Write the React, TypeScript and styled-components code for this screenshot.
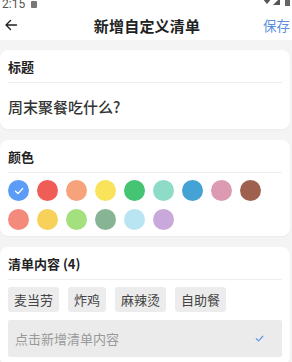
import React from "react";
import styled, { createGlobalStyle } from "styled-components";

const Global = createGlobalStyle`
  html, body { margin: 0; padding: 0; }
  body {
    background: #f4f4f4;
    font-family: "Noto Sans CJK SC", "Noto Sans", sans-serif;
    width: 292px;
    height: 362px;
    overflow: hidden;
  }
`;

const Page = styled.div`
  display: flex;
  flex-direction: column;
  width: 292px;
`;

const Header = styled.div`
  background: #ffffff;
  display: flex;
  flex-direction: column;
  height: 40px;
`;

const StatusBar = styled.div`
  height: 10px;
  overflow: hidden;
  display: flex;
  align-items: flex-start;
  justify-content: space-between;
  padding: 0 0 0 2px;
`;

const StatusTime = styled.div`
  display: flex;
  align-items: center;
  gap: 6px;
  margin-top: -3px;
  font-family: "Roboto", sans-serif;
  font-size: 12px;
  line-height: 14px;
  color: #555;
`;

const StatusNotif = styled.span`
  width: 6px;
  height: 7px;
  background: #777;
  border-radius: 1px;
`;

const StatusIcons = styled.div`
  display: flex;
  align-items: flex-start;
  gap: 2px;
  margin-top: -2px;
`;

const NavBar = styled.div`
  flex: 1;
  display: grid;
  grid-template-columns: 60px 1fr 60px;
  align-items: center;
  padding: 0 2px 0 4px;
`;

const BackButton = styled.div`
  display: flex;
  align-items: center;
  color: #222;
`;

const NavTitle = styled.div`
  text-align: center;
  font-size: 15px;
  font-weight: 700;
  color: #222;
  letter-spacing: 0.2px;
`;

const SaveButton = styled.div`
  text-align: right;
  font-size: 13.5px;
  color: #5a8fe2;
`;

const Content = styled.div`
  display: flex;
  flex-direction: column;
  gap: 11px;
  padding: 10px 2px 0 0;
`;

const Card = styled.div`
  background: #ffffff;
  border-radius: 8px;
  box-shadow: 0 1px 2px rgba(0, 0, 0, 0.04);
  display: flex;
  flex-direction: column;
`;

const CardHeader = styled.div`
  height: 32px;
  display: flex;
  align-items: center;
  margin: 0 8px;
  border-bottom: 1px solid #eeeeee;
  font-size: 13px;
  font-weight: 700;
  color: #222;
`;

const TitleBody = styled.div`
  height: 46px;
  display: flex;
  align-items: center;
  padding: 0 8px;
  font-size: 15px;
  font-weight: 500;
  color: #333;
`;

const ColorGrid = styled.div`
  display: grid;
  grid-template-columns: repeat(9, 21px);
  column-gap: 8px;
  row-gap: 8px;
  padding: 7px 8px 6px;
`;

const Swatch = styled.div<{ $c: string }>`
  width: 21px;
  height: 21px;
  border-radius: 50%;
  background: ${(p) => p.$c};
  display: flex;
  align-items: center;
  justify-content: center;
`;

const ListBody = styled.div`
  display: flex;
  flex-direction: column;
  gap: 8px;
  padding: 7px 8px 8px;
`;

const Chips = styled.div`
  display: flex;
  gap: 9px;
`;

const Chip = styled.div`
  height: 25px;
  padding: 0 6px;
  display: flex;
  align-items: center;
  background: #ececec;
  border-radius: 3px;
  font-size: 13px;
  color: #444;
`;

const InputBox = styled.div`
  height: 37px;
  background: #ebebeb;
  border-radius: 2px;
  display: flex;
  align-items: center;
  justify-content: space-between;
  padding: 0 17px 0 7px;
  font-size: 13px;
  color: #999;
`;

const colors1 = ["#5b9cf6", "#ef5d56", "#f6a27b", "#f8e35b", "#45c474", "#8edcc8", "#44a2d4", "#dc9bb3", "#9f614f"];
const colors2 = ["#f48a7b", "#f8d15b", "#a5e07f", "#86b495", "#b9e4f1", "#c9a9dc"];

const Check = ({ color, size }: { color: string; size: number }) => (
  <svg width={size} height={size} viewBox="0 0 12 12" fill="none">
    <path d="M2.5 6.3 L5 8.6 L9.6 3.6" stroke={color} strokeWidth="1.4" strokeLinecap="round" strokeLinejoin="round" />
  </svg>
);

export default function App() {
  return (
    <>
      <Global />
      <Page>
        <Header>
          <StatusBar>
            <StatusTime>
              <span>2:15</span>
              <StatusNotif />
            </StatusTime>
            <StatusIcons>
              <svg width="30" height="8" viewBox="0 0 30 8">
                <path d="M0 0 L10 0 L5 6 Z" fill="#555" />
                <path d="M11 7 L18 0 L18 7 Z" fill="#555" />
                <rect x="23" y="0" width="5" height="8" fill="#666" />
              </svg>
            </StatusIcons>
          </StatusBar>
          <NavBar>
            <BackButton>
              <svg width="14" height="14" viewBox="0 0 14 14" fill="none">
                <path d="M12.5 7 H2 M6.5 2.5 L2 7 L6.5 11.5" stroke="#222" strokeWidth="1.4" strokeLinecap="round" strokeLinejoin="round" />
              </svg>
            </BackButton>
            <NavTitle>新增自定义清单</NavTitle>
            <SaveButton>保存</SaveButton>
          </NavBar>
        </Header>
        <Content>
          <Card>
            <CardHeader>标题</CardHeader>
            <TitleBody>周末聚餐吃什么?</TitleBody>
          </Card>
          <Card>
            <CardHeader>颜色</CardHeader>
            <ColorGrid>
              {[...colors1, ...colors2].map((c, i) => (
                <Swatch key={i} $c={c}>
                  {i === 0 && <Check color="#ffffff" size={12} />}
                </Swatch>
              ))}
            </ColorGrid>
          </Card>
          <Card>
            <CardHeader>清单内容 (4)</CardHeader>
            <ListBody>
              <Chips>
                <Chip>麦当劳</Chip>
                <Chip>炸鸡</Chip>
                <Chip>麻辣烫</Chip>
                <Chip>自助餐</Chip>
              </Chips>
              <InputBox>
                <span>点击新增清单内容</span>
                <Check color="#6a9ae6" size={11} />
              </InputBox>
            </ListBody>
          </Card>
        </Content>
      </Page>
    </>
  );
}
